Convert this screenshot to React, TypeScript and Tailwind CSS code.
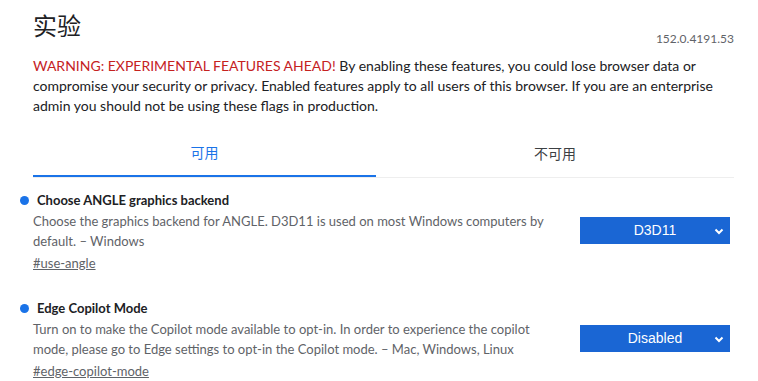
import React from "react";

const font = { fontFamily: 'Lato, "Noto Sans CJK SC", sans-serif' };

const Chevron = () => (
  <svg width="10" height="10" viewBox="0 0 10 10" className="absolute right-[6px] top-1/2 -translate-y-1/2">
    <path d="M1.5 3.5 L5 7 L8.5 3.5" fill="none" stroke="white" strokeWidth="2" />
  </svg>
);

const Flag = ({ title, desc, tag, value }: { title: string; desc: string; tag: string; value: string }) => (
  <div className="relative flex items-start justify-between">
    <span className="absolute -left-[13px] top-[6px] w-[9px] h-[9px] rounded-full bg-[#1a73e8]" />
    <div className="w-[530px]">
      <h3 className="text-[13px] font-bold text-[#202124] leading-[20px] ml-[4px]">{title}</h3>
      <p className="text-[13px] text-[#5f6368] leading-[20px] mt-[1px]">{desc}</p>
      <a className="block text-[13px] text-[#5f6368] underline leading-[20px] mt-[2px]">{tag}</a>
    </div>
    <div className="relative mt-[27px] mr-[4px] w-[150px] h-[27px] bg-[#1a66d4] text-white flex items-center justify-center text-[14px] font-['Liberation_Sans',sans-serif]">
      {value}
      <Chevron />
    </div>
  </div>
);

export default function App() {
  return (
    <div className="w-[758px] h-[381px] bg-white overflow-hidden" style={font}>
      <div className="ml-[33px] w-[701px] pt-[8px]">
        <div className="flex items-end justify-between">
          <h1 className="text-[24px] leading-[36px] text-[#202124]">实验</h1>
          <span className="text-[12px] text-[#5f6368] mb-[-4px]">152.0.4191.53</span>
        </div>
        <p className="mt-[12px] text-[14px] leading-[20px] text-[#202124]">
          <span className="text-[#c5221f]">WARNING: EXPERIMENTAL FEATURES AHEAD!</span> By enabling these features, you could lose browser data or compromise your security or privacy. Enabled features apply to all users of this browser. If you are an enterprise admin you should not be using these flags in production.
        </p>
        <div className="mt-[17px] flex border-b border-[#eeeeee]">
          <div className="w-[343px] h-[44px] pb-[4px] flex items-center justify-center text-[14px] text-[#1a73e8] border-b-2 border-[#1a73e8] -mb-[1px]">可用</div>
          <div className="flex-1 h-[44px] pb-[4px] flex items-center justify-center text-[14px] text-[#3c4043]">不可用</div>
        </div>
        <div className="mt-[12px]">
          <Flag
            title="Choose ANGLE graphics backend"
            desc="Choose the graphics backend for ANGLE. D3D11 is used on most Windows computers by default. – Windows"
            tag="#use-angle"
            value="D3D11"
          />
        </div>
        <div className="mt-[25px]">
          <Flag
            title="Edge Copilot Mode"
            desc="Turn on to make the Copilot mode available to opt-in. In order to experience the copilot mode, please go to Edge settings to opt-in the Copilot mode. – Mac, Windows, Linux"
            tag="#edge-copilot-mode"
            value="Disabled"
          />
        </div>
      </div>
    </div>
  );
}
